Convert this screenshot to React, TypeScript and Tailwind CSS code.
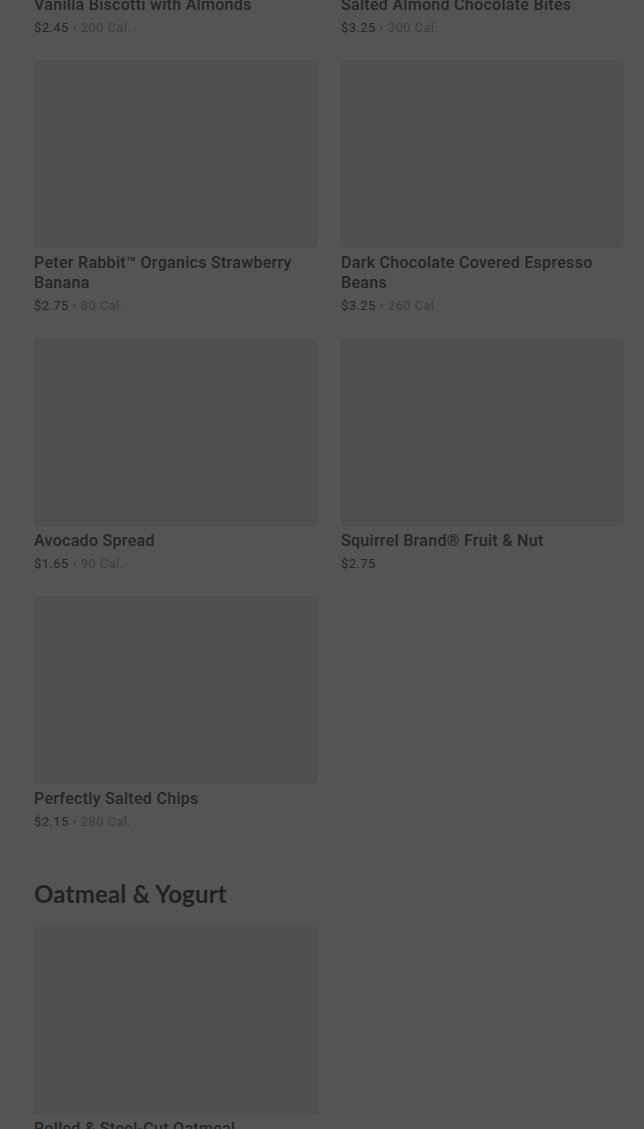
import React from 'react';

type Item = { name: string; price: string; cal?: string };

const snacks: Item[] = [
  { name: 'Vanilla Biscotti with Almonds', price: '$2.45', cal: '200 Cal.' },
  { name: 'Salted Almond Chocolate Bites', price: '$3.25', cal: '300 Cal.' },
  { name: 'Peter Rabbit™ Organics Strawberry Banana', price: '$2.75', cal: '80 Cal.' },
  { name: 'Dark Chocolate Covered Espresso Beans', price: '$3.25', cal: '260 Cal.' },
  { name: 'Avocado Spread', price: '$1.65', cal: '90 Cal.' },
  { name: 'Squirrel Brand® Fruit & Nut', price: '$2.75' },
  { name: 'Perfectly Salted Chips', price: '$2.15', cal: '280 Cal.' },
];

const oatmeal: Item[] = [{ name: 'Rolled & Steel-Cut Oatmeal', price: '$3.45', cal: '160 Cal.' }];

function ItemCard({ item }: { item: Item }) {
  return (
    <div className="flex flex-col">
      <div className="h-[187px] w-full rounded-[4px] bg-[#4f4f4f]" />
      <p className="mt-[5px] text-[16px] leading-5 font-medium tracking-[0.3px] text-[#252525]">{item.name}</p>
      <p className="mt-1 text-[13px] leading-[18px] tracking-[0.4px] text-[#262626]">
        {item.price}
        <span className="text-[#3c3c3c]">{item.cal ? ` • ${item.cal}` : ''}</span>
      </p>
    </div>
  );
}

export default function App() {
  return (
    <div className="h-[1129px] w-full overflow-hidden bg-[#545454] font-['Roboto',sans-serif]">
      {/* page is scrolled, first row partly above the fold */}
      <div className="-mt-[197px] pl-[34px] pr-[20px]">
        <div className="grid grid-cols-2 gap-x-6 gap-y-6">
          {snacks.map((s) => (
            <ItemCard key={s.name} item={s} />
          ))}
        </div>

        <h2 className="mt-[47px] mb-[17px] font-['Lato',sans-serif] text-[24px] leading-8 font-bold tracking-[0.2px] text-[#222222]">
          Oatmeal &amp; Yogurt
        </h2>
        <div className="grid grid-cols-2 gap-x-6 gap-y-6">
          {oatmeal.map((s) => (
            <ItemCard key={s.name} item={s} />
          ))}
        </div>
      </div>
    </div>
  );
}
